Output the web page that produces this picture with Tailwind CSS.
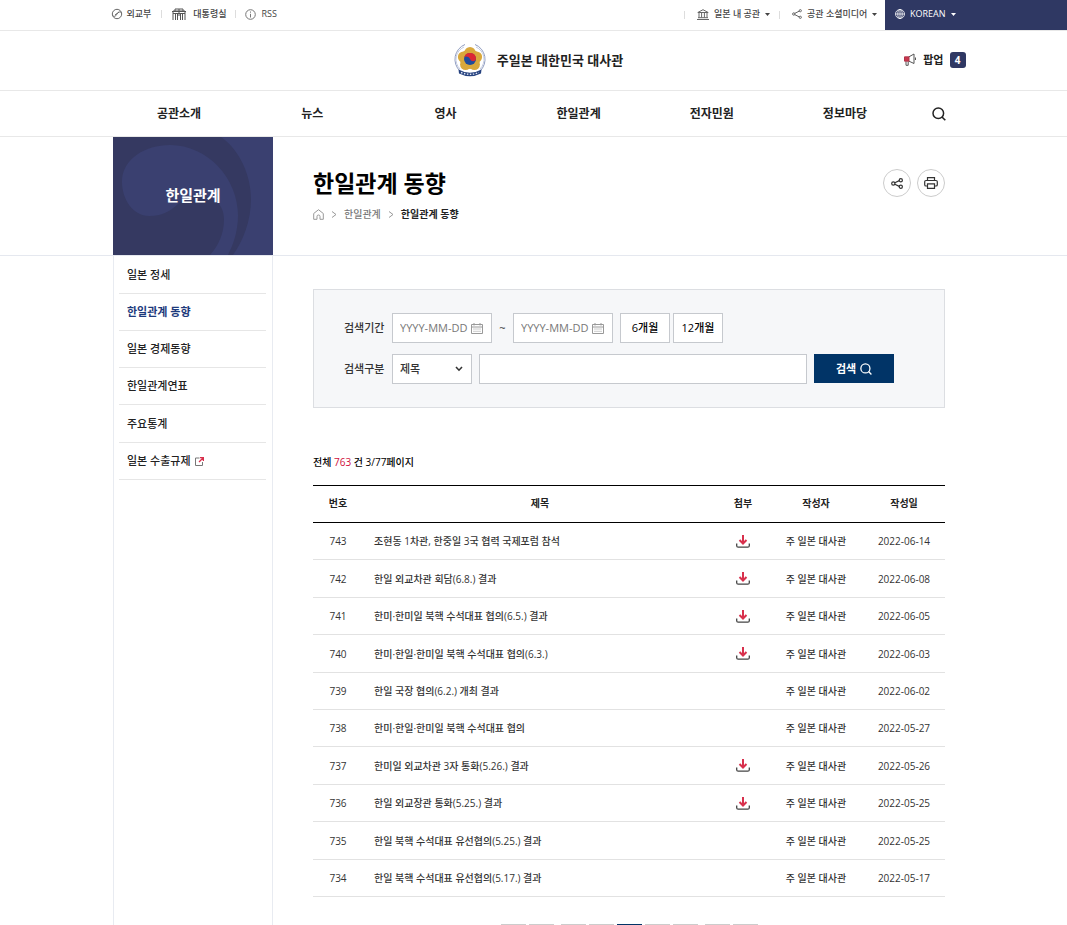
<!DOCTYPE html>
<html lang="ko">
<head>
<meta charset="utf-8">
<meta name="viewport" content="width=device-width, initial-scale=1">
<title>한일관계 동향 | 주일본 대한민국 대사관</title>
<script src="https://cdn.jsdelivr.net/npm/@tailwindcss/browser@4"></script>
</head>
<body class="bg-white font-['Open_Sans','Noto_Sans_CJK_KR',sans-serif] text-[10px] leading-4 font-medium text-[#333]">
<svg class="hidden" aria-hidden="true">
  <symbol id="download" viewBox="0 0 14 13"><path d="M7 0v8M3.500 5 7 8.500 10.500 5" fill="none" stroke="#d8304c" stroke-width="2"/><path d="M.7 8.500v2.200q0 1.500 1.500 1.500h9.600q1.500 0 1.500-1.500V8.500" fill="none" stroke="#444" stroke-width="1.300"/></symbol>
  <symbol id="calendar" viewBox="0 0 12 11"><path d="M.5 1.500h11v9H.5zM.5 4h11M3 0v2.500M9 0v2.500" fill="none" stroke="#999"/><path d="M2.500 6h7M2.500 8.300h7" stroke="#999" stroke-dasharray="1 1"/></symbol>
  <symbol id="lens" viewBox="0 0 14 14"><circle cx="6.300" cy="6.300" r="5.300" fill="none" stroke="currentColor" stroke-width="1.500"/><path d="m10 10 3.300 3.300" stroke="currentColor" stroke-width="1.600"/></symbol>
</svg>

<header>
  <div class="flex h-[31px] items-center justify-between border-b border-[#e8e8e8] pl-[calc(50%-423px)] text-[9px] text-[#444]">
    <nav class="flex items-center pb-[2px]" aria-label="관련 사이트">
      <a href="#" class="flex items-center gap-1">
        <svg class="size-3" viewBox="0 0 12 12" fill="none" stroke="#666"><circle cx="6" cy="6" r="4.700"/><path d="M1.500 7.500C4 9.500 5 7.500 6 6s2.500-3 4.500-1.200M4 7l4-3"/></svg>
        외교부</a>
      <span class="mx-[10px] h-2 w-px bg-[#ddd]"></span>
      <a href="#" class="flex items-center gap-[7px]">
        <svg class="h-3 w-[14px]" viewBox="0 0 14 12" fill="none" stroke="#555"><path d="M1 12V3h12v9M3 3V1h8v2M0 3.500h14M3.500 5v7M5.500 5v7M8.500 5v7M10.500 5v7M5.500 7h3M7 1v4M1 5.500h12"/></svg>
        대통령실</a>
      <span class="mx-[9px] h-2 w-px bg-[#ddd]"></span>
      <a href="#" class="flex items-center gap-[5px]">
        <svg class="size-[11px]" viewBox="0 0 11 11" fill="none" stroke="#777"><circle cx="5.500" cy="5.500" r="4.800"/><path d="M5.500 4.800V8.500M5.500 2.500v1.200"/></svg>
        RSS</a>
    </nav>
    <div class="flex h-full w-[calc(50%+152px)] min-w-[383px] max-w-[383px] items-center">
      <span class="h-2 w-px bg-[#ddd]"></span>
      <button type="button" class="ml-3 flex items-center gap-[5px] pb-[2px]">
        <svg class="h-[11px] w-3" viewBox="0 0 12 11" fill="none" stroke="#666"><path d="M.8 3.500 6 .7l5.200 2.800zM0 10.500h12M1 8.700h10M2 4v4.500M4.600 4v4.500M7.400 4v4.500M10 4v4.500"/></svg>
        일본 내 공관
        <svg class="h-[3px] w-[5px]" viewBox="0 0 5 3" fill="#444"><path d="M0 0h5L2.500 3z"/></svg></button>
      <span class="ml-[9px] h-2 w-px bg-[#ddd]"></span>
      <button type="button" class="ml-3 flex items-center gap-[5px] pb-[2px]">
        <svg class="size-[10px]" viewBox="0 0 10 10" fill="none" stroke="#666"><path d="m2.500 4.500 5-2.500M2.500 5.500l5 2.500"/><circle cx="1.800" cy="5" r="1.200"/><circle cx="8.300" cy="1.700" r="1.100"/><circle cx="8.300" cy="8.300" r="1.100"/></svg>
        공관 소셜미디어
        <svg class="h-[3px] w-[5px]" viewBox="0 0 5 3" fill="#444"><path d="M0 0h5L2.500 3z"/></svg></button>
      <button type="button" class="ml-auto flex h-full w-[182px] items-center gap-[5px] bg-[#2f3863] pb-[2px] pl-[10px] text-white">
        <svg class="size-[10px]" viewBox="0 0 10 10" fill="none" stroke="#fff" stroke-width=".8"><circle cx="5" cy="5" r="4.500"/><ellipse cx="5" cy="5" rx="2.200" ry="4.500"/><path d="M5 .5v9M.5 5h9"/></svg>
        KOREAN
        <svg class="h-[3px] w-[5px]" viewBox="0 0 5 3" fill="#fff"><path d="M0 0h5L2.500 3z"/></svg></button>
    </div>
  </div>

  <div class="border-b border-[#e8e8e8]">
    <div class="mx-auto grid h-[59px] max-w-[864px] grid-cols-[1fr_auto_1fr] items-center pb-[2px]">
      <span></span>
      <a href="#" class="flex items-center gap-[10px] pl-[9px] text-[13px] font-bold text-[#222]">
        <svg class="size-[34px]" viewBox="0 0 34 34" fill="none">
          <path d="M12 1.500A16 16 0 0 0 7 28M22 1.500A16 16 0 0 1 27 28" stroke="#8f9cc0" stroke-width="1"/>
          <path d="M11 4A13.500 13.500 0 0 0 7 26M23 4a13.500 13.500 0 0 1 4 22" stroke="#c5cce0" stroke-width="1"/>
          <g fill="#d9a83c"><circle cx="17" cy="9.500" r="5.500"/><circle cx="23.600" cy="14" r="5.500"/><circle cx="21.400" cy="21.500" r="5.500"/><circle cx="12.600" cy="21.500" r="5.500"/><circle cx="10.400" cy="14" r="5.500"/><circle cx="17" cy="16" r="10"/></g>
          <circle cx="17" cy="16" r="6" fill="#1f4c9c"/>
          <path d="M11.200 14.500A6 6 0 0 1 23 16C22 19 18.500 19 17 16S12.500 13 11.200 14.500z" fill="#dc2634"/>
          <path d="M5.500 26.500Q17 33 28.500 26.500l-.5 4Q17 36 6 30.500z" fill="#26427f"/>
          <path d="M8 29.500q9 3.700 18 0" stroke="#dfe5f2" stroke-width="1.400" stroke-dasharray="1.500 1.500"/>
        </svg>
        주일본 대한민국 대사관</a>
      <button type="button" class="flex items-center justify-self-end text-[11px] font-bold text-[#222]">
        <svg class="h-[13px] w-3" viewBox="0 0 12 13"><path d="M.5 4h4.500v4H.5z" fill="#c8384e"/><path d="M5 3.800 10 1v9.500L5 8.200M11.500 4.500v2.500M2 8.300v4h2.200v-4" fill="none" stroke="#555"/><path d="M.5 3.800H5v4.400H.5z" fill="none" stroke="#b03248"/></svg>
        <span class="mr-[6px] ml-[7px]">팝업</span>
        <span class="flex size-4 items-center justify-center rounded-[3px] bg-[#2f3863] text-[10px] text-white">4</span>
      </button>
    </div>
  </div>

  <div class="border-b border-[#e8e8e8]">
    <nav class="mx-auto flex h-[45px] max-w-[842px] items-center text-center text-[12px] font-bold text-[#222]" aria-label="주 메뉴">
      <a href="#" class="flex-1">공관소개</a>
      <a href="#" class="flex-1">뉴스</a>
      <a href="#" class="flex-1">영사</a>
      <a href="#" class="flex-1">한일관계</a>
      <a href="#" class="flex-1">전자민원</a>
      <a href="#" class="flex-1">정보마당</a>
      <button type="button" aria-label="검색 열기" class="mr-[9px] ml-5 text-[#222]"><svg class="size-[14px]"><use href="#lens"/></svg></button>
    </nav>
  </div>
</header>

<div class="border-b border-[#e5e8ef]">
  <div class="mx-auto flex h-[118px] max-w-[841px] gap-10">
    <div class="relative flex w-[160px] shrink-0 items-center justify-center bg-[#353961]">
      <svg class="absolute inset-0 size-full" viewBox="0 0 160 118" fill="#3a4070"><path d="M108 0C128 14 138 40 138 62c0 22-8 42-18 56h40V0z"/><path d="M9 45C9 22 32 8 57 8c38 0 68 34 68 70 0 17-5 30-10 40H97c9-10 14-22 14-36 0-16-13-26-31-24-14 2-18 21-44 21C20 79 9 62 9 45z"/></svg>
      <h2 class="relative pb-[2px] text-[15px] font-bold text-white">한일관계</h2>
    </div>
    <div class="flex flex-1 justify-between pt-8 pr-[9px]">
      <div>
        <h1 class="text-[23px] leading-7 font-bold text-black">한일관계 동향</h1>
        <nav class="mt-[9px] flex items-center text-[#777]" aria-label="현재 위치">
          <a href="#" aria-label="홈"><svg class="size-[11px]" viewBox="0 0 11 11" fill="none" stroke="#999"><path d="M.7 4.500 5.500.7l4.800 3.800v5.800H7V7.500a1.500 1.500 0 0 0-3 0v2.800H.7z"/></svg></a>
          <svg class="mx-[7px] h-[7px] w-[6px]" viewBox="0 0 6 7" fill="none" stroke="#999"><path d="m1 .5 4 3-4 3"/></svg>
          <a href="#">한일관계</a>
          <svg class="mx-[7px] h-[7px] w-[6px]" viewBox="0 0 6 7" fill="none" stroke="#999"><path d="m1 .5 4 3-4 3"/></svg>
          <span class="font-bold text-[#222]" aria-current="page">한일관계 동향</span>
        </nav>
      </div>
      <div class="flex gap-[6px]">
        <button type="button" aria-label="공유" class="flex size-7 items-center justify-center rounded-full border border-[#ccc]"><svg class="h-[11px] w-3" viewBox="0 0 12 11" fill="none" stroke="#333" stroke-width="1.200"><path d="m3.800 4.800 4.500-2.200M3.800 6.200l4.500 2.200"/><circle cx="2.300" cy="5.500" r="1.600"/><circle cx="9.800" cy="2.200" r="1.600"/><circle cx="9.800" cy="8.800" r="1.600"/></svg></button>
        <button type="button" aria-label="인쇄" class="flex size-7 items-center justify-center rounded-full border border-[#ccc]"><svg class="h-3 w-[14px]" viewBox="0 0 14 12" fill="none" stroke="#333" stroke-width="1.200"><path d="M3.500 3.500V.7h7v2.800M3.500 9H2Q.7 9 .7 7.700V4.800Q.7 3.500 2 3.500h10q1.300 0 1.300 1.300v2.900Q13.300 9 12 9h-1.500M3.500 6.800h7v4.500h-7z"/></svg></button>
      </div>
    </div>
  </div>
</div>

<div class="mx-auto flex max-w-[841px] gap-10">
  <aside class="w-[160px] shrink-0 border-x border-[#e8ebf1] pr-[6px] pl-[5px]">
    <ul class="text-[11px] font-medium text-[#222]">
      <li class="border-b border-[#e6e6e6]"><a href="#" class="flex h-[37px] items-center pl-2">일본 정세</a></li>
      <li class="border-b border-[#e6e6e6]"><a href="#" class="flex h-9 items-center pl-2 font-bold text-[#1d3a7c]" aria-current="page">한일관계 동향</a></li>
      <li class="border-b border-[#e6e6e6]"><a href="#" class="flex h-9 items-center pl-2">일본 경제동향</a></li>
      <li class="border-b border-[#e6e6e6]"><a href="#" class="flex h-9 items-center pl-2">한일관계연표</a></li>
      <li class="border-b border-[#e6e6e6]"><a href="#" class="flex h-[37px] items-center pl-2">주요통계</a></li>
      <li class="border-b border-[#e6e6e6]"><a href="#" class="flex h-9 items-center gap-1 pl-2">일본 수출규제
        <svg class="size-[9px]" viewBox="0 0 9 9" fill="none"><path d="M4.500 1H.5v7.500h7V5" stroke="#777"/><path d="m4 5 4-4M5 .6h3.400V4" stroke="#d8304c" stroke-width="1.300"/></svg></a></li>
    </ul>
  </aside>

  <main class="min-w-0 flex-1 pt-[33px] pr-[9px]">
    <form class="border border-[#dcdee2] bg-[#f6f7f9] pt-[23px] pr-[50px] pb-[23px] pl-[30px] text-[11px]">
      <div class="flex h-[30px] items-center">
        <label for="from" class="w-12">검색기간</label>
        <div class="flex h-full w-[100px] items-center border border-[#c6c9ce] bg-white pr-2 pl-[7px]">
          <input id="from" type="text" placeholder="YYYY-MM-DD" class="w-full min-w-0 font-normal outline-none placeholder:text-[#777]">
          <button type="button" aria-label="시작일 선택"><svg class="h-[11px] w-3"><use href="#calendar"/></svg></button>
        </div>
        <span class="w-[21px] text-center">~</span>
        <div class="flex h-full w-[100px] items-center border border-[#c6c9ce] bg-white pr-2 pl-[7px]">
          <input type="text" aria-label="종료일" placeholder="YYYY-MM-DD" class="w-full min-w-0 font-normal outline-none placeholder:text-[#777]">
          <button type="button" aria-label="종료일 선택"><svg class="h-[11px] w-3"><use href="#calendar"/></svg></button>
        </div>
        <button type="button" class="ml-[7px] h-full w-[50px] border border-[#c6c9ce] bg-white text-black">6개월</button>
        <button type="button" class="ml-[3px] h-full w-[50px] border border-[#c6c9ce] bg-white text-black">12개월</button>
      </div>
      <div class="mt-[11px] flex h-[30px]">
        <label for="kind" class="w-12 self-center">검색구분</label>
        <div class="relative w-20">
          <select id="kind" class="size-full appearance-none border border-[#c6c9ce] bg-white pl-[7px]"><option>제목</option><option>내용</option></select>
          <svg class="pointer-events-none absolute top-3 right-[9px] h-[6px] w-2" viewBox="0 0 8 6" fill="none" stroke="#333" stroke-width="1.600"><path d="m1 1 3 3.200L7 1"/></svg>
        </div>
        <input type="text" aria-label="검색어" class="ml-[7px] min-w-0 flex-1 border border-[#c6c9ce] bg-white px-2">
        <button type="submit" class="ml-[7px] flex h-[29px] w-20 items-center justify-center gap-1 bg-[#013467] font-bold text-white">검색 <svg class="size-3"><use href="#lens"/></svg></button>
      </div>
    </form>

    <p class="mt-[46px] text-black">전체 <span class="text-[#d0103c]">763</span> 건 3/77페이지</p>

    <table class="mt-[15px] w-full table-fixed border-collapse text-center">
      <colgroup><col class="w-[50px]"><col><col class="w-[52px]"><col class="w-[94px]"><col class="w-[82px]"></colgroup>
      <thead class="border-y border-black">
        <tr class="h-[37px] text-[#222]"><th scope="col" class="pb-[2px] font-bold">번호</th><th scope="col" class="pb-[2px] font-bold">제목</th><th scope="col" class="pb-[2px] font-bold">첨부</th><th scope="col" class="pb-[2px] font-bold">작성자</th><th scope="col" class="pb-[2px] font-bold">작성일</th></tr>
      </thead>
      <tbody>
        <tr class="h-[37px] border-b border-[#e2e2e2]"><td>743</td><td class="pl-[11px] text-left"><a href="#">조현동 1차관, 한중일 3국 협력 국제포럼 참석</a></td><td><a href="#" aria-label="첨부파일"><svg class="mx-auto h-[13px] w-[14px]"><use href="#download"/></svg></a></td><td>주 일본 대사관</td><td>2022-06-14</td></tr>
        <tr class="h-[38px] border-b border-[#e2e2e2]"><td>742</td><td class="pl-[11px] text-left"><a href="#">한일 외교차관 회담(6.8.) 결과</a></td><td><a href="#" aria-label="첨부파일"><svg class="mx-auto h-[13px] w-[14px]"><use href="#download"/></svg></a></td><td>주 일본 대사관</td><td>2022-06-08</td></tr>
        <tr class="h-[37px] border-b border-[#e2e2e2]"><td>741</td><td class="pl-[11px] text-left"><a href="#">한미·한미일 북핵 수석대표 협의(6.5.) 결과</a></td><td><a href="#" aria-label="첨부파일"><svg class="mx-auto h-[13px] w-[14px]"><use href="#download"/></svg></a></td><td>주 일본 대사관</td><td>2022-06-05</td></tr>
        <tr class="h-[38px] border-b border-[#e2e2e2]"><td>740</td><td class="pl-[11px] text-left"><a href="#">한미·한일·한미일 북핵 수석대표 협의(6.3.)</a></td><td><a href="#" aria-label="첨부파일"><svg class="mx-auto h-[13px] w-[14px]"><use href="#download"/></svg></a></td><td>주 일본 대사관</td><td>2022-06-03</td></tr>
        <tr class="h-[37px] border-b border-[#e2e2e2]"><td>739</td><td class="pl-[11px] text-left"><a href="#">한일 국장 협의(6.2.) 개최 결과</a></td><td></td><td>주 일본 대사관</td><td>2022-06-02</td></tr>
        <tr class="h-[37px] border-b border-[#e2e2e2]"><td>738</td><td class="pl-[11px] text-left"><a href="#">한미·한일·한미일 북핵 수석대표 협의</a></td><td></td><td>주 일본 대사관</td><td>2022-05-27</td></tr>
        <tr class="h-[38px] border-b border-[#e2e2e2]"><td>737</td><td class="pl-[11px] text-left"><a href="#">한미일 외교차관 3자 통화(5.26.) 결과</a></td><td><a href="#" aria-label="첨부파일"><svg class="mx-auto h-[13px] w-[14px]"><use href="#download"/></svg></a></td><td>주 일본 대사관</td><td>2022-05-26</td></tr>
        <tr class="h-[37px] border-b border-[#e2e2e2]"><td>736</td><td class="pl-[11px] text-left"><a href="#">한일 외교장관 통화(5.25.) 결과</a></td><td><a href="#" aria-label="첨부파일"><svg class="mx-auto h-[13px] w-[14px]"><use href="#download"/></svg></a></td><td>주 일본 대사관</td><td>2022-05-25</td></tr>
        <tr class="h-[38px] border-b border-[#e2e2e2]"><td>735</td><td class="pl-[11px] text-left"><a href="#">한일 북핵 수석대표 유선협의(5.25.) 결과</a></td><td></td><td>주 일본 대사관</td><td>2022-05-25</td></tr>
        <tr class="h-[37px] border-b border-[#e2e2e2]"><td>734</td><td class="pl-[11px] text-left"><a href="#">한일 북핵 수석대표 유선협의(5.17.) 결과</a></td><td></td><td>주 일본 대사관</td><td>2022-05-17</td></tr>
      </tbody>
    </table>

    <nav class="mt-[27px] mb-10 flex justify-center gap-[3px]" aria-label="페이지">
      <a href="#" aria-label="처음" class="h-[25px] w-[25px] border border-[#ccc]"></a>
      <a href="#" aria-label="이전" class="mr-1 h-[25px] w-[25px] border border-[#ccc]"></a>
      <a href="#" aria-label="1" class="h-[25px] w-[25px] border border-[#ccc]"></a>
      <a href="#" aria-label="2" class="h-[25px] w-[25px] border border-[#ccc]"></a>
      <a href="#" aria-label="3" aria-current="page" class="h-[25px] w-[25px] border border-[#013467] bg-[#013467]"></a>
      <a href="#" aria-label="4" class="h-[25px] w-[25px] border border-[#ccc]"></a>
      <a href="#" aria-label="5" class="h-[25px] w-[25px] border border-[#ccc]"></a>
      <a href="#" aria-label="다음" class="ml-1 h-[25px] w-[25px] border border-[#ccc]"></a>
      <a href="#" aria-label="마지막" class="h-[25px] w-[25px] border border-[#ccc]"></a>
    </nav>
  </main>
</div>
</body>
</html>
